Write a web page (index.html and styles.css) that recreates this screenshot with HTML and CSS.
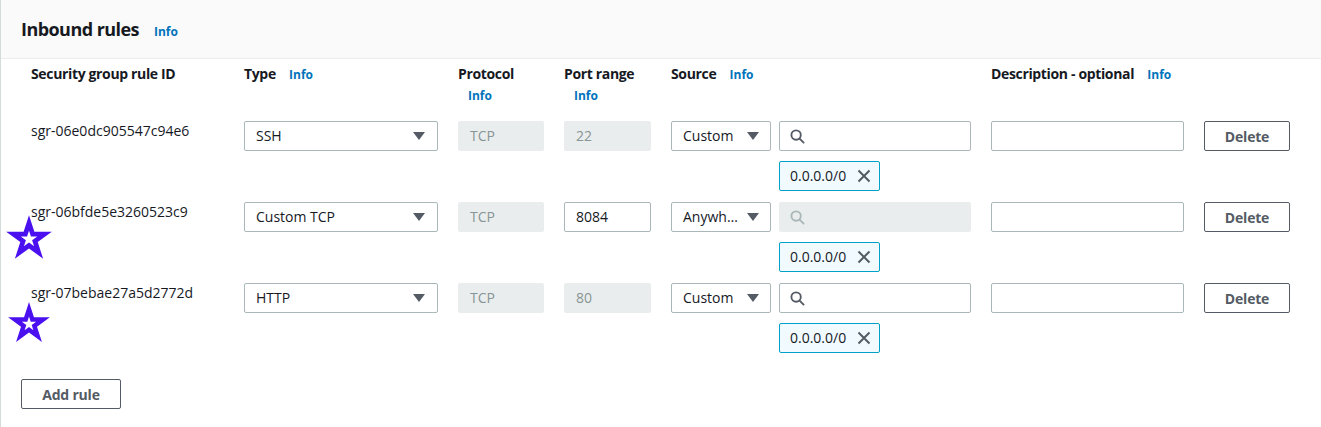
FILE: index.html
```html
<!DOCTYPE html>
<html lang="en">
<head>
<meta charset="utf-8">
<title>Inbound rules</title>
<link rel="stylesheet" href="styles.css">
</head>
<body>
<div class="panel">
  <div class="panel-header">
    <h2 class="title">Inbound rules</h2>
    <a class="info info-title">Info</a>
  </div>
  <div class="panel-body">
    <div class="rules">
      <div class="rule-grid head">
        <div class="label">Security group rule ID</div>
        <div class="label">Type <a class="info">Info</a></div>
        <div class="label">Protocol <a class="info">Info</a></div>
        <div class="label">Port range <a class="info">Info</a></div>
        <div class="label">Source <a class="info">Info</a></div>
        <div class="label">Description - optional <a class="info">Info</a></div>
        <div></div>
      </div>

      <div class="rule-grid row">
        <div class="rule-id">sgr-06e0dc905547c94e6</div>
        <div class="select"><span>SSH</span><i class="caret"></i></div>
        <div class="field disabled">TCP</div>
        <div class="field disabled">22</div>
        <div class="source">
          <div class="source-top">
            <div class="select small"><span>Custom</span><i class="caret"></i></div>
            <div class="search">
              <svg class="mag" viewBox="0 0 16 16" width="15" height="15"><circle cx="6.5" cy="6.5" r="5" fill="none" stroke="currentColor" stroke-width="2"/><line x1="10.2" y1="10.2" x2="14.5" y2="14.5" stroke="currentColor" stroke-width="2" stroke-linecap="round"/></svg>
            </div>
          </div>
          <div class="token"><span>0.0.0.0/0</span><svg viewBox="0 0 14 14" width="14" height="14"><path d="M1.5 1.5 L12.5 12.5 M12.5 1.5 L1.5 12.5" stroke="#545b64" stroke-width="2" fill="none"/></svg></div>
        </div>
        <div class="field"></div>
        <button class="btn">Delete</button>
      </div>

      <div class="rule-grid row">
        <div class="rule-id">sgr-06bfde5e3260523c9</div>
        <div class="select"><span>Custom TCP</span><i class="caret"></i></div>
        <div class="field disabled">TCP</div>
        <div class="field">8084</div>
        <div class="source">
          <div class="source-top">
            <div class="select small"><span>Anywh…</span><i class="caret"></i></div>
            <div class="search disabled">
              <svg class="mag" viewBox="0 0 16 16" width="15" height="15"><circle cx="6.5" cy="6.5" r="5" fill="none" stroke="currentColor" stroke-width="2"/><line x1="10.2" y1="10.2" x2="14.5" y2="14.5" stroke="currentColor" stroke-width="2" stroke-linecap="round"/></svg>
            </div>
          </div>
          <div class="token"><span>0.0.0.0/0</span><svg viewBox="0 0 14 14" width="14" height="14"><path d="M1.5 1.5 L12.5 12.5 M12.5 1.5 L1.5 12.5" stroke="#545b64" stroke-width="2" fill="none"/></svg></div>
        </div>
        <div class="field"></div>
        <button class="btn">Delete</button>
      </div>

      <div class="rule-grid row">
        <div class="rule-id">sgr-07bebae27a5d2772d</div>
        <div class="select"><span>HTTP</span><i class="caret"></i></div>
        <div class="field disabled">TCP</div>
        <div class="field disabled">80</div>
        <div class="source">
          <div class="source-top">
            <div class="select small"><span>Custom</span><i class="caret"></i></div>
            <div class="search">
              <svg class="mag" viewBox="0 0 16 16" width="15" height="15"><circle cx="6.5" cy="6.5" r="5" fill="none" stroke="currentColor" stroke-width="2"/><line x1="10.2" y1="10.2" x2="14.5" y2="14.5" stroke="currentColor" stroke-width="2" stroke-linecap="round"/></svg>
            </div>
          </div>
          <div class="token"><span>0.0.0.0/0</span><svg viewBox="0 0 14 14" width="14" height="14"><path d="M1.5 1.5 L12.5 12.5 M12.5 1.5 L1.5 12.5" stroke="#545b64" stroke-width="2" fill="none"/></svg></div>
        </div>
        <div class="field"></div>
        <button class="btn">Delete</button>
      </div>
    </div>
    <button class="btn add">Add rule</button>
  </div>

  <svg class="star star-1" viewBox="-100 -100 200 181" width="48" height="44">
    <polygon fill="#4a10f0" points="0,-100 22.45,-30.9 95.1,-30.9 36.3,11.8 58.8,80.9 0,38.2 -58.8,80.9 -36.3,11.8 -95.1,-30.9 -22.45,-30.9"/>
    <polygon fill="#ffffff" transform="scale(0.36)" points="0,-100 22.45,-30.9 95.1,-30.9 36.3,11.8 58.8,80.9 0,38.2 -58.8,80.9 -36.3,11.8 -95.1,-30.9 -22.45,-30.9"/>
  </svg>
  <svg class="star star-2" viewBox="-100 -100 200 181" width="44" height="40">
    <polygon fill="#4a10f0" points="0,-100 22.45,-30.9 95.1,-30.9 36.3,11.8 58.8,80.9 0,38.2 -58.8,80.9 -36.3,11.8 -95.1,-30.9 -22.45,-30.9"/>
    <polygon fill="#ffffff" transform="scale(0.34)" points="0,-100 22.45,-30.9 95.1,-30.9 36.3,11.8 58.8,80.9 0,38.2 -58.8,80.9 -36.3,11.8 -95.1,-30.9 -22.45,-30.9"/>
  </svg>
</div>
</body>
</html>
```

FILE: styles.css
```css
* { box-sizing: border-box; }

html, body {
  margin: 0;
  padding: 0;
  background: #ffffff;
}

body {
  font-family: "Open Sans", "Noto Sans", "Liberation Sans", sans-serif;
  font-size: 14px;
  line-height: 20px;
  color: #16191f;
}

.panel {
  position: relative;
  min-height: 427px;
  border-left: 1px solid #d5dbdb;
}

.panel-header {
  display: flex;
  align-items: baseline;
  gap: 15px;
  height: 59px;
  padding: 18px 20px 0;
  background: #fafafa;
  border-bottom: 1px solid #eaeded;
}

.title {
  margin: 0;
  font-size: 18px;
  line-height: 22px;
  font-weight: 700;
  letter-spacing: -0.55px;
  color: #16191f;
}

.info {
  font-size: 12px;
  font-weight: 700;
  letter-spacing: 0;
  color: #0073bb;
  margin-left: 10px;
  text-decoration: none;
  display: inline-block;
}

.info-title {
  margin-left: 0;
}

.panel-body {
  padding: 4px 0 0 20px;
}

.rules {
  display: flex;
  flex-direction: column;
  gap: 11px;
  margin-left: 10px;
}

.rule-grid {
  display: grid;
  grid-template-columns: 193px 194px 86px 87px 300px 193px 86px;
  column-gap: 20px;
  align-items: start;
}

.head {
  margin-bottom: 4px;
}

.label {
  font-weight: 700;
  line-height: 21px;
  letter-spacing: -0.35px;
}

.rule-id {
  line-height: 20px;
}

.select,
.field,
.search {
  height: 30px;
  border: 1px solid #aab7b8;
  border-radius: 2px;
  background: #ffffff;
  padding: 0 11px;
  display: flex;
  align-items: center;
  line-height: 20px;
}

.select {
  justify-content: space-between;
}

.caret {
  display: block;
  width: 0;
  height: 0;
  border-left: 6px solid transparent;
  border-right: 6px solid transparent;
  border-top: 8px solid #545b64;
  margin-right: 1px;
}

.disabled {
  background: #eaeded;
  border-color: #eaeded;
  color: #879596;
}

.source {
  display: flex;
  flex-direction: column;
  gap: 10px;
}

.source-top {
  display: flex;
  gap: 8px;
}

.select.small {
  width: 100px;
  padding-right: 10px;
}

.search {
  width: 192px;
  color: #545b64;
  padding-left: 10px;
}

.search.disabled {
  color: #aab7b8;
}

.token {
  align-self: flex-start;
  margin-left: 108px;
  height: 30px;
  display: flex;
  align-items: center;
  gap: 11px;
  padding: 0 8px 0 10px;
  background: #f1faff;
  border: 1px solid #00a1c9;
  border-radius: 2px;
}

.btn {
  height: 30px;
  border: 1px solid #545b64;
  border-radius: 2px;
  background: #ffffff;
  color: #545b64;
  font-family: inherit;
  font-size: 14px;
  font-weight: 700;
  letter-spacing: -0.2px;
  padding: 0;
  cursor: pointer;
}

.add {
  width: 100px;
  margin-top: 26px;
}

.star {
  position: absolute;
  display: block;
}

.star-1 {
  left: 4px;
  top: 215px;
}

.star-2 {
  left: 6px;
  top: 302px;
}
```
